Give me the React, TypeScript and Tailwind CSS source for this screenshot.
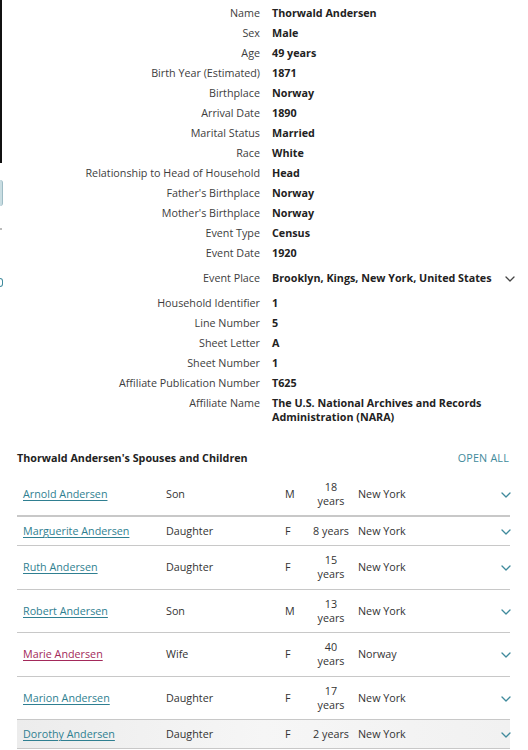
import React from "react";

const facts: [string, string][] = [
  ["Name", "Thorwald Andersen"],
  ["Sex", "Male"],
  ["Age", "49 years"],
  ["Birth Year (Estimated)", "1871"],
  ["Birthplace", "Norway"],
  ["Arrival Date", "1890"],
  ["Marital Status", "Married"],
  ["Race", "White"],
  ["Relationship to Head of Household", "Head"],
  ["Father's Birthplace", "Norway"],
  ["Mother's Birthplace", "Norway"],
  ["Event Type", "Census"],
  ["Event Date", "1920"],
];

const facts2: [string, string][] = [
  ["Household Identifier", "1"],
  ["Line Number", "5"],
  ["Sheet Letter", "A"],
  ["Sheet Number", "1"],
  ["Affiliate Publication Number", "T625"],
];

type Person = {
  name: string;
  rel: string;
  sex: string;
  age: [string, string?];
  place: string;
  wife?: boolean;
  last?: boolean;
};

const people: Person[] = [
  { name: "Arnold Andersen", rel: "Son", sex: "M", age: ["18", "years"], place: "New York" },
  { name: "Marguerite Andersen", rel: "Daughter", sex: "F", age: ["8 years"], place: "New York" },
  { name: "Ruth Andersen", rel: "Daughter", sex: "F", age: ["15", "years"], place: "New York" },
  { name: "Robert Andersen", rel: "Son", sex: "M", age: ["13", "years"], place: "New York" },
  { name: "Marie Andersen", rel: "Wife", sex: "F", age: ["40", "years"], place: "Norway", wife: true },
  { name: "Marion Andersen", rel: "Daughter", sex: "F", age: ["17", "years"], place: "New York" },
  { name: "Dorothy Andersen", rel: "Daughter", sex: "F", age: ["2 years"], place: "New York", last: true },
];

function Chevron({ color, w = 10, h = 6 }: { color: string; w?: number; h?: number }) {
  return (
    <svg width={w} height={h} viewBox="0 0 10 6" fill="none">
      <path d="M1 1l4 4 4-4" stroke={color} strokeWidth="1.3" strokeLinecap="round" strokeLinejoin="round" />
    </svg>
  );
}

function FactRow({ label, value }: { label: string; value: string }) {
  return (
    <div className="grid grid-cols-[260px_1fr] gap-x-[12px] py-[3px] leading-[14px]">
      <div className="text-right text-[#3d3d3d]">{label}</div>
      <div className="font-bold text-[#222]">{value}</div>
    </div>
  );
}

export default function App() {
  return (
    <div
      className="relative w-[528px] h-[750px] overflow-hidden bg-white text-[10.75px] flex"
      style={{ fontFamily: '"Open Sans", "Noto Sans", sans-serif' }}
    >
      {/* left edge clipped fragments */}
      <div className="w-[3px] shrink-0 flex flex-col">
        <div className="w-[2px] h-[163px] bg-[#111]" />
        <div className="h-[17px]" />
        <div className="w-[3px] h-[26px] rounded-r-[3px] bg-[#c9dde2] border-r border-[#9ebcc5]" />
        <div className="h-[22px]" />
        <div className="w-[2px] h-[2px] bg-[#bbb]" />
        <div className="h-[48px]" />
        <div className="w-[3px] h-[9px] rounded-r-full border-[1.5px] border-l-0 border-[#3f8a9c]" />
      </div>

      <div className="flex-1 flex flex-col -ml-[3px]">
        <div className="pt-[3px]">
          {facts.map(([l, v]) => (
            <FactRow key={l} label={l} value={v} />
          ))}
          <div className="grid grid-cols-[260px_1fr] gap-x-[12px] h-[30px] items-center leading-[14px]">
            <div className="text-right text-[#3d3d3d]">Event Place</div>
            <div className="flex items-center font-bold text-[#222]">
              <span>Brooklyn, Kings, New York, United States</span>
              <span className="ml-[13px] mt-[1px]">
                <Chevron color="#444" />
              </span>
            </div>
          </div>
          {facts2.map(([l, v]) => (
            <FactRow key={l} label={l} value={v} />
          ))}
          <div className="grid grid-cols-[260px_1fr] gap-x-[12px] py-[3px] leading-[14px]">
            <div className="text-right text-[#3d3d3d]">Affiliate Name</div>
            <div className="font-bold text-[#222] w-[230px]">
              The U.S. National Archives and Records Administration (NARA)
            </div>
          </div>
        </div>

        <div className="mt-[23px] ml-[17px] w-[493px] flex items-center justify-between leading-[16px]">
          <div className="font-bold text-[#222]">Thorwald Andersen's Spouses and Children</div>
          <div className="text-[#3f8a9c] tracking-[0.2px] pr-[1px]">OPEN ALL</div>
        </div>

        <div className="mt-[7px] ml-[17px] w-[493px] flex flex-col">
          {people.map((p, i) => (
            <div
              key={p.name}
              className={
                "flex items-center pt-[7px] leading-[14px] text-[#333] border-[#c8c8c8] " +
                (i === 0 ? "border-b-[2px] " : "border-b ") +
                (i === 2 || i === 4 ? "pb-[8px] " : "pb-[7px] ") +
                (p.last ? "bg-gradient-to-r from-[#ececec] via-[#f6f6f6] to-[#f1f1f1]" : "")
              }
            >
              <div className="w-[149px] pl-[6px]">
                <span
                  className={
                    "underline underline-offset-[2px] " +
                    (p.wife ? "text-[#a3295a] decoration-[#a3295a]" : "text-[#2f7f91] decoration-[#2f7f91]")
                  }
                >
                  {p.name}
                </span>
              </div>
              <div className="w-[119px]">{p.rel}</div>
              <div className="w-[25px]">{p.sex}</div>
              <div className="w-[42px] flex flex-col items-center text-center">
                <span className="whitespace-nowrap">{p.age[0]}</span>
                {p.age[1] && <span>{p.age[1]}</span>}
              </div>
              <div className="flex-1 pl-[6px]">{p.place}</div>
              <div className="mr-[-1px] mt-[2px]">
                <Chevron color="#3f8a9c" />
              </div>
            </div>
          ))}
        </div>
      </div>
    </div>
  );
}
